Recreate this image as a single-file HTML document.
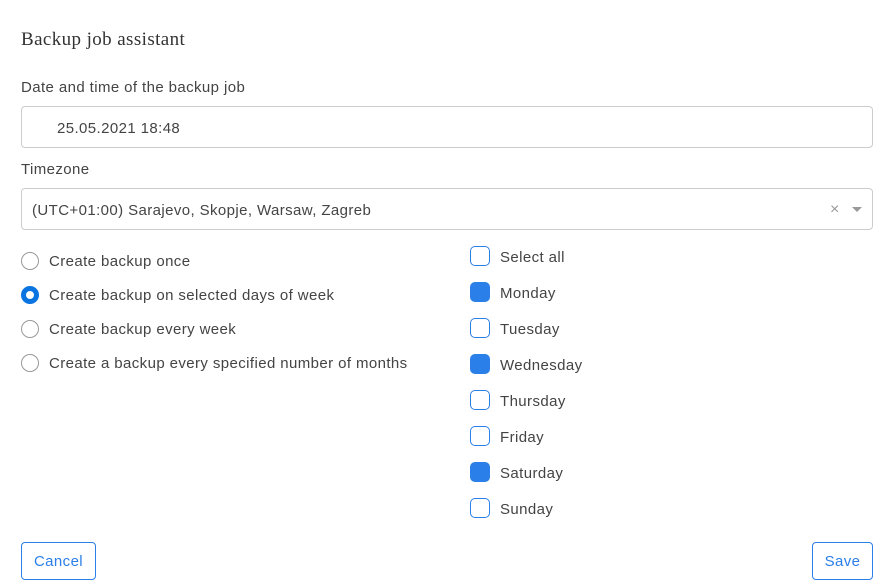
<!DOCTYPE html><html><head><style>
body{margin:0;width:895px;height:586px;background:#fff;font-family:"Liberation Sans",sans-serif;color:#444;position:relative;overflow:hidden}
.a{position:absolute;white-space:nowrap}
.t{font-size:15px;letter-spacing:0.4px}
.box{position:absolute;border:1px solid #ccc;border-radius:4px;background:#fff}
.r{position:absolute;width:16px;height:16px;border:1px solid #999;border-radius:50%;left:21px}
.c{position:absolute;width:18px;height:18px;border:1px solid #2b7fe8;border-radius:5px;left:470px}
.c.on{background:#2b7fe8}
.btn{position:absolute;border:1px solid #2b7fe8;border-radius:4px;color:#2b7fe8;font-size:15px;letter-spacing:0.4px;text-align:center;line-height:38px;height:36px}
</style></head><body>
<div class="a" style="left:21px;top:29px;font-family:'Liberation Serif',serif;font-size:19px;letter-spacing:0.4px;color:#333">Backup job assistant</div>
<div class="a t" style="left:21px;top:79px">Date and time of the backup job</div>
<div class="box" style="left:21px;top:106px;width:850px;height:40px"></div>
<div class="a t" style="left:57px;top:120px">25.05.2021 18:48</div>
<div class="a t" style="left:21px;top:161px">Timezone</div>
<div class="box" style="left:21px;top:188px;width:850px;height:40px"></div>
<div class="a t" style="left:32px;top:202px">(UTC+01:00) Sarajevo, Skopje, Warsaw, Zagreb</div>
<div class="a" style="left:830px;top:201px;color:#999;font-size:16px">×</div>
<div class="a" style="left:852px;top:207px;width:0;height:0;border-left:5px solid transparent;border-right:5px solid transparent;border-top:5px solid #999"></div>
<div class="r" style="top:252px"></div><div class="a t" style="left:49px;top:253px">Create backup once</div>
<div class="r" style="top:286px;border:5px solid #0a74e0;width:8px;height:8px"></div><div class="a t" style="left:49px;top:287px">Create backup on selected days of week</div>
<div class="r" style="top:320px"></div><div class="a t" style="left:49px;top:321px">Create backup every week</div>
<div class="r" style="top:354px"></div><div class="a t" style="left:49px;top:355px">Create a backup every specified number of months</div>
<div class="c" style="top:246px"></div><div class="a t" style="left:500px;top:249px">Select all</div>
<div class="c on" style="top:282px"></div><div class="a t" style="left:500px;top:285px">Monday</div>
<div class="c" style="top:318px"></div><div class="a t" style="left:500px;top:321px">Tuesday</div>
<div class="c on" style="top:354px"></div><div class="a t" style="left:500px;top:357px">Wednesday</div>
<div class="c" style="top:390px"></div><div class="a t" style="left:500px;top:393px">Thursday</div>
<div class="c" style="top:426px"></div><div class="a t" style="left:500px;top:429px">Friday</div>
<div class="c on" style="top:462px"></div><div class="a t" style="left:500px;top:465px">Saturday</div>
<div class="c" style="top:498px"></div><div class="a t" style="left:500px;top:501px">Sunday</div>
<div class="btn" style="left:21px;top:542px;width:73px">Cancel</div>
<div class="btn" style="left:812px;top:542px;width:59px">Save</div>
</body></html>
